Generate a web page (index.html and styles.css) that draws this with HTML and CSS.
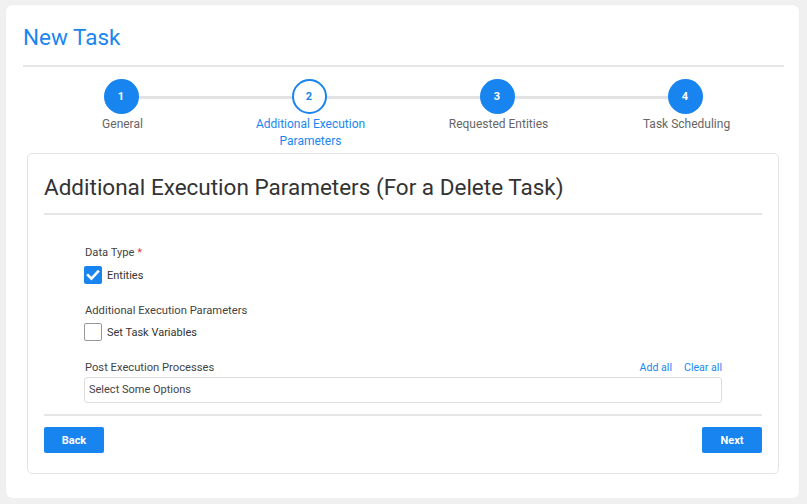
FILE: index.html
```html
<!DOCTYPE html>
<html>
<head>
<meta charset="utf-8">
<link rel="stylesheet" href="styles.css">
</head>
<body>
<div class="page">
  <h1 class="page-title">New Task</h1>
  <div class="rule"></div>
  <ol class="stepper">
    <li class="step done"><span class="dot">1</span><span class="label">General</span></li>
    <li class="step active"><span class="dot">2</span><span class="label">Additional Execution<br>Parameters</span></li>
    <li class="step done"><span class="dot">3</span><span class="label">Requested Entities</span></li>
    <li class="step done last"><span class="dot">4</span><span class="label">Task Scheduling</span></li>
  </ol>
  <div class="panel">
    <h2 class="panel-title">Additional Execution Parameters (For a Delete Task)</h2>
    <div class="rule"></div>
    <div class="form">
      <div class="field">
        <div class="field-label">Data Type <span class="req">*</span></div>
        <label class="check">
          <span class="box checked"><svg viewBox="0 0 18 18" width="18" height="18"><path d="M4 9.3 L7.4 12.6 L14 5.6" fill="none" stroke="#fff" stroke-width="2.6" stroke-linecap="square"/></svg></span>
          <span class="check-text">Entities</span>
        </label>
      </div>
      <div class="field">
        <div class="field-label">Additional Execution Parameters</div>
        <label class="check">
          <span class="box"></span>
          <span class="check-text">Set Task Variables</span>
        </label>
      </div>
      <div class="field">
        <div class="field-head">
          <div class="field-label">Post Execution Processes</div>
          <div class="links"><a>Add all</a><a>Clear all</a></div>
        </div>
        <div class="select">Select Some Options</div>
      </div>
    </div>
    <div class="rule bottom"></div>
    <div class="actions">
      <button class="btn">Back</button>
      <button class="btn">Next</button>
    </div>
  </div>
</div>
</body>
</html>
```
FILE: styles.css
```css
* { box-sizing: border-box; }
html, body { margin: 0; }
body {
  background: #f0f0f0;
  padding: 5px 8px 0 6px;
  font-family: Roboto, "Liberation Sans", sans-serif;
}
.page {
  background: #fff;
  border-radius: 6px;
  height: 493px;
  padding: 19px 15px 0 17px;
  box-shadow: 0 0 1px rgba(0,0,0,0.08);
}
.page-title {
  margin: 0;
  font-size: 22.5px;
  line-height: 26px;
  font-weight: 400;
  color: #1a86f0;
}
.rule {
  height: 2px;
  background: #e6e6e6;
  margin-top: 15px;
}
.stepper {
  list-style: none;
  margin: 12px 5px 0 4px;
  padding: 0;
  display: grid;
  grid-template-columns: repeat(4, 1fr);
}
.step {
  position: relative;
  display: flex;
  flex-direction: column;
  align-items: center;
}
.step::after {
  content: "";
  position: absolute;
  top: 17px;
  left: 50%;
  width: 100%;
  height: 3px;
  background: #e2e2e2;
  z-index: 0;
}
.step.last::after { display: none; }
.dot {
  position: relative;
  z-index: 1;
  width: 35px;
  height: 35px;
  border-radius: 50%;
  background: #1784f0;
  color: #fff;
  font-size: 11px;
  font-weight: 700;
  display: flex;
  align-items: center;
  justify-content: center;
}
.step.active .dot {
  background: #fff;
  border: 2px solid #1784f0;
  color: #1784f0;
}
.label {
  margin-top: 2px;
  padding-left: 3px;
  font-size: 12px;
  line-height: 17px;
  color: #666;
  text-align: center;
}
.step.active .label { color: #1a86f0; }
.panel {
  margin: 3px 5px 0 4px;
  border: 1px solid #e4e4e4;
  border-radius: 5px;
  padding: 20px 16px 20px 16px;
}
.panel-title {
  margin: 0;
  font-size: 22.5px;
  line-height: 26px;
  font-weight: 400;
  color: #333;
}
.panel .rule { margin-top: 13px; }
.form {
  padding: 31px 40px 0 40px;
  display: flex;
  flex-direction: column;
  gap: 20px;
}
.field-label {
  font-size: 11.2px;
  line-height: 14px;
  color: #444;
  padding-left: 1px;
}
.req { color: #e53935; }
.check {
  display: flex;
  align-items: center;
  gap: 5px;
  margin-top: 6px;
}
.field:nth-child(2) .check { margin-top: 5px; }
.box {
  width: 18px;
  height: 18px;
  border: 1px solid #999;
  border-radius: 2px;
  background: #fff;
  display: flex;
}
.box.checked {
  border: none;
  background: #1784f0;
}
.check-text {
  font-size: 11px;
  color: #333;
}
.field-head {
  display: flex;
  justify-content: space-between;
  align-items: flex-end;
}
.links {
  display: flex;
  gap: 12px;
  font-size: 10.6px;
  line-height: 14px;
  color: #1a86f0;
}
.select {
  margin-top: 2px;
  height: 26px;
  border: 1px solid #ddd;
  border-radius: 3px;
  padding: 0 4px;
  font-size: 11px;
  line-height: 24px;
  color: #444;
}
.panel .rule.bottom { margin-top: 11px; }
.actions {
  margin-top: 11px;
  display: flex;
  justify-content: space-between;
}
.btn {
  width: 60px;
  height: 26px;
  border: none;
  border-radius: 2px;
  background: #1784f0;
  color: #fff;
  font-family: Roboto, "Liberation Sans", sans-serif;
  font-size: 11px;
  font-weight: 700;
  padding: 0;
}
```
